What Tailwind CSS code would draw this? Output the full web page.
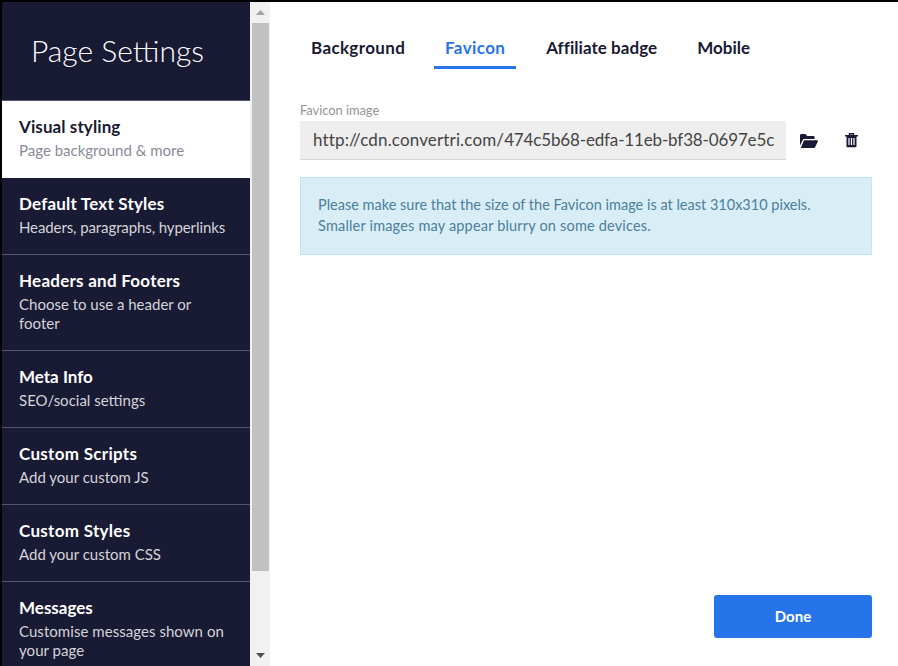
<!DOCTYPE html>
<html lang="en">
<head>
  <meta charset="UTF-8" />
  <title>Page Settings</title>
  <script src="https://cdn.jsdelivr.net/npm/@tailwindcss/browser@4"></script>
</head>
<body class="bg-black font-['Lato',sans-serif] overflow-hidden">
  <div class="w-[898px] h-[666px] pt-[2px] pl-[2px] flex overflow-hidden">
    <!-- sidebar -->
    <aside class="w-[248px] h-[664px] shrink-0 bg-[#191a33] text-white overflow-hidden">
      <div class="h-[98px] pl-[29px] pt-[28px] text-[30px] leading-[40px] font-light">Page Settings</div>
      <div class="h-[78px] bg-white border-t border-[#55566a] pl-[17px] pt-[15px]">
        <div class="text-[17px] leading-[22px] font-bold text-[#191a33] tracking-[0.1px]">Visual styling</div>
        <div class="text-[15px] leading-[20px] mt-[2px] text-[#8a8b96]">Page background &amp; more</div>
      </div>
      <div class="h-[77px] border-b border-[#55566a] pl-[17px] pt-[15px]">
        <div class="text-[17px] leading-[22px] font-bold tracking-[0.2px]">Default Text Styles</div>
        <div class="text-[15px] leading-[20px] mt-[2px] text-[#d4d4da] tracking-[-0.1px]">Headers, paragraphs, hyperlinks</div>
      </div>
      <div class="h-[96px] border-b border-[#55566a] pl-[17px] pt-[15px] pr-[30px]">
        <div class="text-[17px] leading-[22px] font-bold tracking-[0.25px]">Headers and Footers</div>
        <div class="text-[15px] leading-[19px] mt-[3px] text-[#d4d4da]">Choose to use a header or footer</div>
      </div>
      <div class="h-[77px] border-b border-[#55566a] pl-[17px] pt-[15px]">
        <div class="text-[17px] leading-[22px] font-bold">Meta Info</div>
        <div class="text-[15px] leading-[20px] mt-[2px] text-[#d4d4da]">SEO/social settings</div>
      </div>
      <div class="h-[77px] border-b border-[#55566a] pl-[17px] pt-[15px]">
        <div class="text-[17px] leading-[22px] font-bold tracking-[0.3px]">Custom Scripts</div>
        <div class="text-[15px] leading-[20px] mt-[2px] text-[#d4d4da]">Add your custom JS</div>
      </div>
      <div class="h-[77px] border-b border-[#55566a] pl-[17px] pt-[15px]">
        <div class="text-[17px] leading-[22px] font-bold tracking-[0.3px]">Custom Styles</div>
        <div class="text-[15px] leading-[20px] mt-[2px] text-[#d4d4da]">Add your custom CSS</div>
      </div>
      <div class="pl-[17px] pt-[15px] pr-[20px]">
        <div class="text-[17px] leading-[22px] font-bold">Messages</div>
        <div class="text-[15px] leading-[19px] mt-[3px] text-[#d4d4da] tracking-[0.05px]">Customise messages shown on your page</div>
      </div>
    </aside>

    <!-- scrollbar -->
    <div class="w-[20px] h-[664px] shrink-0 bg-[#f1f1f1] flex flex-col items-center">
      <div class="h-[21px] w-full flex items-center justify-center">
        <svg width="9" height="5" viewBox="0 0 9 5"><path d="M4.500 0L9 5H0z" fill="#a3a3a3"/></svg>
      </div>
      <div class="w-[17px] h-[548px] bg-[#c1c1c1]"></div>
      <div class="flex-1"></div>
      <div class="h-[21px] w-full flex items-center justify-center">
        <svg width="9" height="5" viewBox="0 0 9 5"><path d="M0 0H9L4.500 5z" fill="#505050"/></svg>
      </div>
    </div>

    <!-- main panel -->
    <main class="flex-1 h-[664px] bg-white flex flex-col pl-[30px] pr-[26px] pb-[28px]">
      <nav class="flex h-[66px] pt-[26px] text-[17px] font-bold text-[#191a33]">
        <div class="ml-[11px] leading-[40px] tracking-[0.35px]">Background</div>
        <div class="ml-[29px] w-[82px] h-[41px] text-center leading-[40px] text-[#2774ea] border-b-[3px] border-[#2774ea] tracking-[0.4px]">Favicon</div>
        <div class="ml-[30px] leading-[40px] tracking-[0.05px]">Affiliate badge</div>
        <div class="ml-[40px] leading-[40px]">Mobile</div>
      </nav>
      <label class="mt-[34px] text-[12.800px] leading-[16px] text-[#949494]">Favicon image</label>
      <div class="flex items-center mt-[3px]">
        <div class="w-[486px] h-[39px] bg-[#eeeeee] border-b border-[#d5d5d5] pl-[13px] pr-[12px] text-[17px] leading-[38px] text-[#444444] overflow-hidden whitespace-nowrap"><span class="tracking-[0.15px]">http://cdn.convertri.com/</span><span class="tracking-[-0.15px]">474c5b68-edfa-11eb-bf38-0697e5c</span></div>
        <svg class="ml-[14px]" width="18" height="14" viewBox="0 0 18 14">
          <path d="M0 1.500C0 .7.6 0 1.400 0h4l1.800 2h6c.8 0 1.400.6 1.400 1.400V5H4.400C3.600 5 3 5.400 2.700 6L0 11.500z" fill="#191a33"/>
          <path d="M4 6.200h13.300c.5 0 .8.500.6 1l-2.700 5.800c-.2.500-.7 1-1.300 1H.8z" fill="#191a33"/>
        </svg>
        <svg class="ml-[27px]" width="13" height="15" viewBox="0 0 13 15">
          <path d="M4.500 2V.8h4V2M0 2.700h13" fill="none" stroke="#191a33" stroke-width="1.500"/>
          <path d="M1.500 3v10.300c0 .6.500 1 1 1h8c.5 0 1-.4 1-1V3z" fill="#191a33"/>
          <path d="M4 5v7M6.500 5v7M9 5v7" stroke="#ffffff" stroke-width="1.200"/>
        </svg>
      </div>
      <div class="mt-[17px] h-[78px] bg-[#d9edf7] border border-[#bce8f1] pl-[17px] pt-[16px] text-[14.500px] leading-[21px] text-[#4b7f9b]">
        Please make sure that the size of the Favicon image is at least 310x310 pixels.<br>
        <span class="tracking-[0.18px]">Smaller images may appear blurry on some devices.</span>
      </div>
      <div class="flex-1"></div>
      <div class="flex justify-end">
        <button class="w-[158px] h-[43px] bg-[#2774ea] rounded-[3px] text-white text-[15px] font-bold">Done</button>
      </div>
    </main>
  </div>
</body>
</html>
